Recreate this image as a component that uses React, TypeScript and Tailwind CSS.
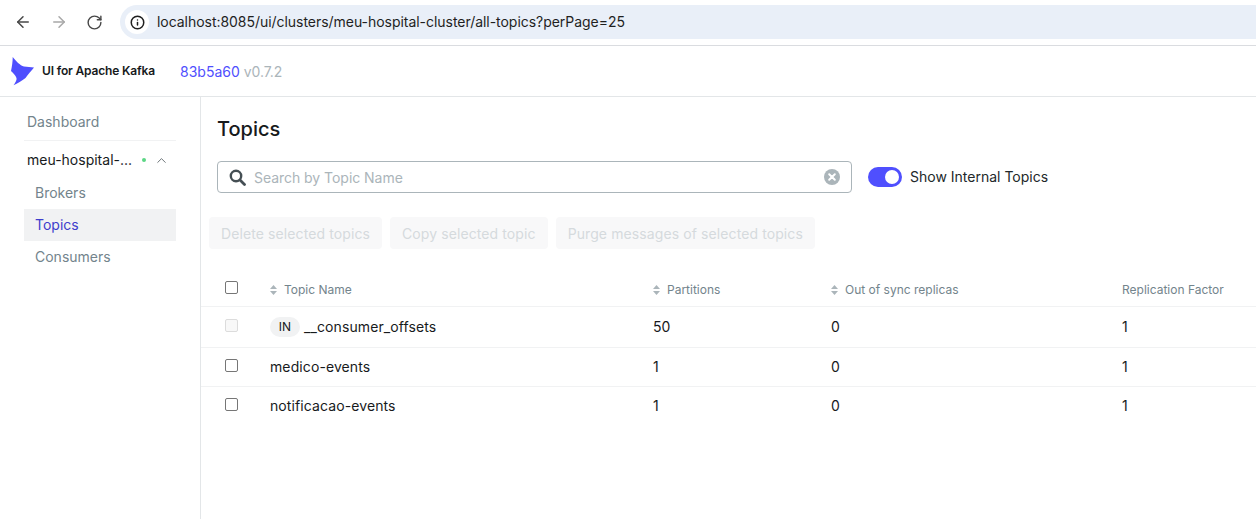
import { ArrowLeft, ArrowRight, RotateCw, Info, ChevronUp } from 'lucide-react';

const font = { fontFamily: 'Inter, "Noto Sans", sans-serif' };

function SortIcon() {
  return (
    <svg width="7" height="10" viewBox="0 0 7 10" className="shrink-0">
      <path d="M3.5 0 L7 4 H0 Z M0 6 H7 L3.5 10 Z" fill="#abb5ba" />
    </svg>
  );
}

function HeaderCell({ label }: { label: string }) {
  return (
    <div className="flex items-center gap-[7px] text-xs text-[#73848c]">
      <SortIcon />
      <span>{label}</span>
    </div>
  );
}

const rows = [
  { name: '__consumer_offsets', partitions: '50', internal: true, height: 'h-[41px]' },
  { name: 'medico-events', partitions: '1', internal: false, height: 'h-[39px]' },
  { name: 'notificacao-events', partitions: '1', internal: false, height: 'h-[38px]' },
];

export default function App() {
  return (
    <div className="w-[1256px] h-[519px] overflow-hidden bg-white flex flex-col" style={font}>
      {/* browser bar */}
      <div className="h-[46px] shrink-0 flex items-start pt-[5px] border-b border-[#dadce0]">
        <div className="flex items-center gap-[18px] pl-[14px] pr-[17px] h-[34px]">
          <ArrowLeft className="w-[18px] h-[18px] text-[#474747]" />
          <ArrowRight className="w-[18px] h-[18px] text-[#a8a8a8]" />
          <RotateCw className="w-[17px] h-[17px] text-[#474747]" />
        </div>
        <div className="flex-1 h-[34px] rounded-l-full bg-[#e9eff8] flex items-center pl-[5px]">
          <div className="w-[24px] h-[24px] rounded-full bg-white flex items-center justify-center">
            <Info className="w-[15px] h-[15px] text-[#1f1f1f]" strokeWidth={2.4} />
          </div>
          <span className="ml-[8px] text-sm tracking-[-0.04px] text-[#1f1f1f]">
            localhost:8085/ui/clusters/meu-hospital-cluster/all-topics?perPage=25
          </span>
        </div>
      </div>

      {/* app header */}
      <div className="h-[51px] shrink-0 flex items-center border-b border-[#e3e6e8] pl-[11px]">
        <svg width="24" height="30" viewBox="0 0 24 30" className="shrink-0">
          <path d="M1.7 1 C5 5 9 9.5 13 10.5 L23 11.5 C20.5 14.5 17 18.5 14.5 22 C11 24.5 6.5 27.5 2.5 29.3 C4.5 26.5 6 24 5.5 22 C4.5 19 2 17 0 15 C1 10.5 1.7 5.5 1.7 1 Z" fill="#4f4ffe" />
        </svg>
        <span className="ml-[7px] text-xs font-semibold tracking-[-0.16px] text-[#171a1c]">UI for Apache Kafka</span>
        <span className="ml-[25px] mt-[2px] text-sm text-[#4f4ffe]">83b5a60</span>
        <span className="ml-[4px] mt-[2px] text-sm tracking-[-0.1px] text-[#abb5ba]">v0.7.2</span>
      </div>

      <div className="flex flex-1 min-h-0">
        {/* sidebar */}
        <aside className="w-[201px] shrink-0 border-r border-[#e3e6e8] pl-[24px] pr-[24px] pt-[8px]">
          <div className="h-[36px] pl-[3px] flex items-center text-sm text-[#73848c] border-b border-[#f1f2f3] pb-[1px]">
            Dashboard
          </div>
          <div className="h-[36px] mt-[1px] pl-[3px] flex items-center text-sm text-[#171a1c]">
            <span>meu-hospital-...</span>
            <span className="ml-[10px] w-[4px] h-[4px] rounded-full bg-[#5cd685]" />
            <ChevronUp className="ml-[8px] w-[15px] h-[15px] text-[#454f54]" strokeWidth={1.25} />
          </div>
          <div className="h-[32px] mt-[-1px] pl-[11px] flex items-center text-sm text-[#73848c]">Brokers</div>
          <div className="h-[32px] pl-[11px] flex items-center text-sm text-[#3e3ecc] bg-[#f1f2f3]">Topics</div>
          <div className="h-[32px] pl-[11px] flex items-center text-sm text-[#73848c]">Consumers</div>
        </aside>

        {/* main */}
        <main className="flex-1 min-w-0 pt-[20px]">
          <h1 className="pl-[16px] text-xl font-medium leading-[24px] text-[#171a1c]">Topics</h1>

          <div className="mt-[20px] pl-[16px] flex items-center">
            <div className="w-[635px] h-[32px] rounded border border-[#abb5ba] flex items-center pl-[11px] pr-[11px]">
              <svg width="17" height="17" viewBox="0 0 17 17" className="shrink-0">
                <circle cx="7" cy="7" r="5.2" fill="none" stroke="#454f54" strokeWidth="2.4" />
                <path d="M11 11 L15.5 15.5" stroke="#454f54" strokeWidth="2.8" strokeLinecap="round" />
              </svg>
              <span className="ml-[8px] mt-[2px] flex-1 text-sm tracking-[-0.04px] text-[#abb5ba]">Search by Topic Name</span>
              <svg width="16" height="16" viewBox="0 0 16 16" className="shrink-0">
                <circle cx="8" cy="8" r="8" fill="#abb5ba" />
                <path d="M5.2 5.2 L10.8 10.8 M10.8 5.2 L5.2 10.8" stroke="#fff" strokeWidth="2" strokeLinecap="round" />
              </svg>
            </div>
            <div className="ml-[16px] w-[34px] h-[20px] rounded-full bg-[#4f4ffe] flex items-center justify-end pr-[3px]">
              <div className="w-[14px] h-[14px] rounded-full bg-white" />
            </div>
            <span className="ml-[8px] text-sm text-[#22282a]">Show Internal Topics</span>
          </div>

          <div className="mt-[24px] pl-[8px] flex gap-[8px]">
            {['Delete selected topics', 'Copy selected topic', 'Purge messages of selected topics'].map((label) => (
              <div key={label} className="h-[32px] px-[12px] pt-[2px] rounded bg-[#f8f8f9] flex items-center text-sm tracking-[0.1px] text-[#d5dadd]">
                {label}
              </div>
            ))}
          </div>

          <div className="mt-[24px]">
            <div className="h-[34px] grid grid-cols-[69px_383px_178px_291px_1fr] items-start border-b border-[#f1f2f3]">
              <div className="pl-[24px] pt-[8px]">
                <input type="checkbox" className="block w-[13px] h-[13px] appearance-none rounded-[2px] border border-[#767676] bg-white" />
              </div>
              <div className="pt-[9px]"><HeaderCell label="Topic Name" /></div>
              <div className="pt-[9px]"><HeaderCell label="Partitions" /></div>
              <div className="pt-[9px]"><HeaderCell label="Out of sync replicas" /></div>
              <div className="pt-[9px] text-xs text-[#73848c]">Replication Factor</div>
            </div>
            {rows.map((row) => (
              <div key={row.name} className={`${row.height} grid grid-cols-[69px_383px_178px_291px_1fr] items-center border-b border-[#f1f2f3] last:border-b-0 text-sm tracking-[0.1px] text-[#171a1c]`}>
                <div className="pl-[24px] pb-[3px]">
                  <input
                    type="checkbox"
                    disabled={row.internal}
                    className={
                      row.internal
                        ? 'block w-[13px] h-[13px] appearance-none rounded-[2px] border border-[#dcdcdc] bg-[#f8f8f8]'
                        : 'block w-[13px] h-[13px] appearance-none rounded-[2px] border border-[#767676] bg-white'
                    }
                  />
                </div>
                <div className="flex items-center">
                  {row.internal && (
                    <span className="mr-[4px] w-[30px] h-[20px] rounded-full bg-[#f1f2f3] flex items-center justify-center text-xs text-[#171a1c]">
                      IN
                    </span>
                  )}
                  {row.name}
                </div>
                <div>{row.partitions}</div>
                <div>0</div>
                <div>1</div>
              </div>
            ))}
          </div>
        </main>
      </div>
    </div>
  );
}
